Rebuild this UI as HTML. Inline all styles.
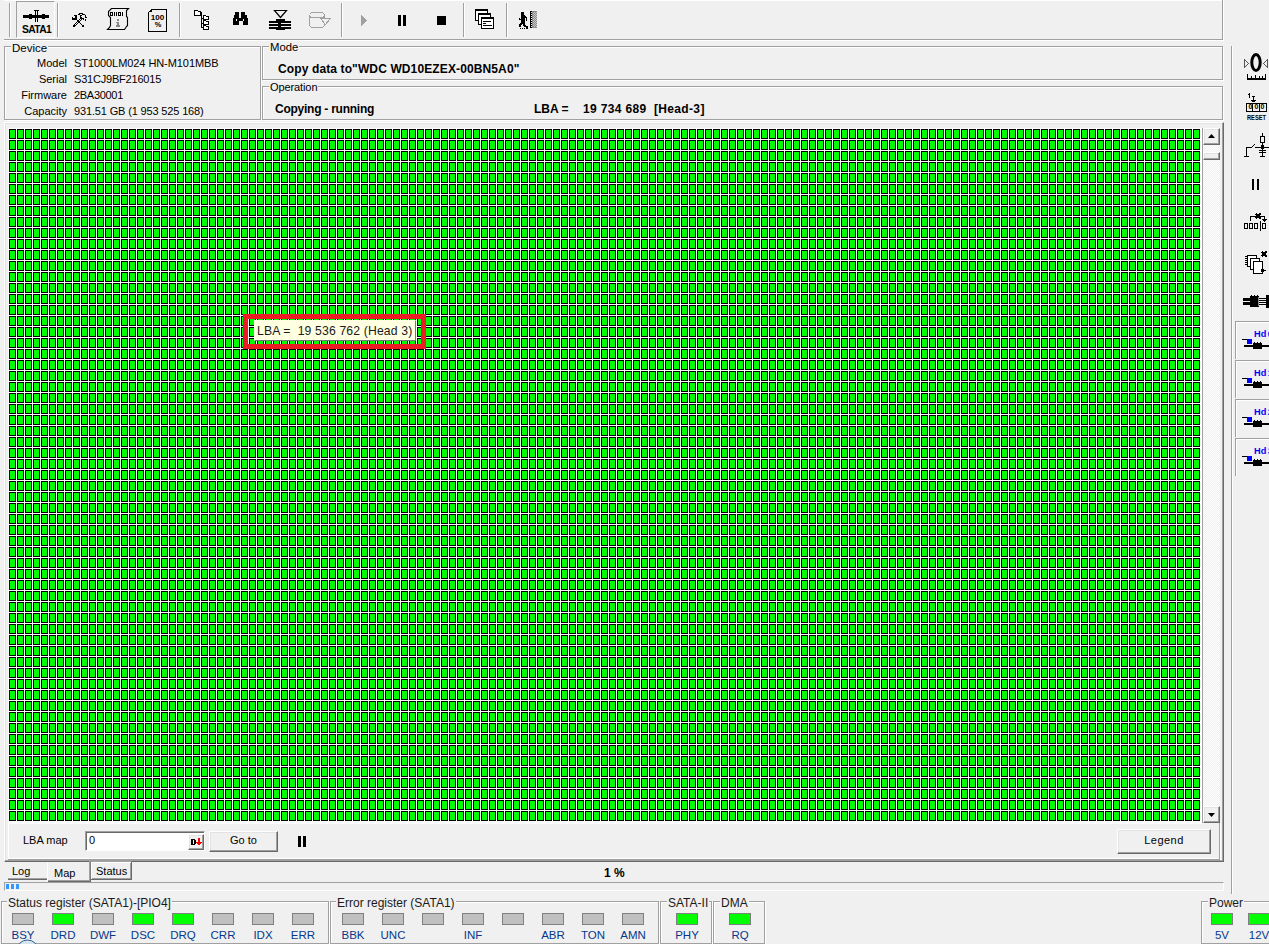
<!DOCTYPE html>
<html><head><meta charset="utf-8">
<style>
*{margin:0;padding:0;box-sizing:border-box}
html,body{width:1269px;height:944px;overflow:hidden;background:#f0f0f0;font-family:"Liberation Sans",sans-serif;color:#000}
.a{position:absolute}
.hl{position:absolute;height:1px;background:#a0a0a0}
.wl{position:absolute;height:1px;background:#fff}
.vl{position:absolute;width:1px;background:#a0a0a0}
.vw{position:absolute;width:1px;background:#fff}
.grp{position:absolute;border:1px solid #a0a0a0;box-shadow:inset 1px 1px 0 #fff,1px 1px 0 #fff}
.t{position:absolute;white-space:pre;font-size:11px;line-height:13px}
.b{font-weight:bold}
.sep{position:absolute;top:3px;width:2px;height:34px;border-left:1px solid #a0a0a0;border-right:1px solid #fff}
.led{position:absolute;width:22px;height:12px;border:1px solid #808080;background:#c0c0c0;top:913px}
.led.on{background:#00ff00;border-color:#7f7f7f}
.lt{position:absolute;white-space:pre;font-size:11.5px;line-height:14px;color:#06388a;top:928px}
.gt{position:absolute;white-space:pre;font-size:12px;line-height:14px;color:#1a1a1a;background:#f0f0f0;padding:0 1px;top:896px}
.btn{position:absolute;background:#f0f0f0;border-top:1px solid #fff;border-left:1px solid #fff;border-right:1px solid #696969;border-bottom:1px solid #696969;box-shadow:inset -1px -1px 0 #a0a0a0,inset 1px 1px 0 #e3e3e3}
</style></head><body>

<!-- top toolbar frame -->
<div class="wl" style="left:4px;top:0;width:1219px"></div>
<div class="hl" style="left:4px;top:39px;width:1219px"></div>
<div class="wl" style="left:4px;top:40px;width:1220px"></div>
<div class="vl" style="left:1222px;top:0;height:40px"></div>
<div class="vw" style="left:1223px;top:0;height:41px"></div>

<div class="sep" style="left:9px"></div>
<div class="sep" style="left:57px"></div>
<div class="sep" style="left:179px"></div>
<div class="sep" style="left:341px"></div>
<div class="sep" style="left:463px"></div>
<div class="sep" style="left:506px"></div>

<!-- SATA1 pressed button -->
<div class="a" style="left:16px;top:1px;width:39px;height:37px;border-top:1px solid #a0a0a0;border-left:1px solid #a0a0a0;border-right:1px solid #fff;border-bottom:1px solid #fff"></div>

<!-- ===== toolbar icons ===== -->
<svg class="a" style="left:0;top:0" width="560" height="40" shape-rendering="crispEdges">
 <!-- SATA connector -->
 <rect x="23" y="15" width="26" height="3" fill="#000"/>
 <rect x="29" y="14" width="3" height="5" fill="#000"/>
 <rect x="42" y="14" width="3" height="5" fill="#000"/>
 <rect x="34" y="10" width="5" height="1" fill="#000"/>
 <rect x="35" y="10" width="1" height="12" fill="#000"/>
 <rect x="37" y="10" width="1" height="12" fill="#000"/>
 <!-- hammer & wrench -->
 <g fill="#000"><rect x="72" y="17" width="1" height="1"/><rect x="72" y="18" width="1" height="1"/><rect x="72" y="19" width="1" height="1"/><rect x="73" y="18" width="1" height="1"/><rect x="73" y="19" width="1" height="1"/><rect x="73" y="25" width="1" height="1"/><rect x="73" y="26" width="1" height="1"/><rect x="74" y="15" width="1" height="1"/><rect x="74" y="18" width="1" height="1"/><rect x="74" y="19" width="1" height="1"/><rect x="74" y="24" width="1" height="1"/><rect x="74" y="25" width="1" height="1"/><rect x="74" y="26" width="1" height="1"/><rect x="75" y="15" width="1" height="1"/><rect x="75" y="16" width="1" height="1"/><rect x="75" y="17" width="1" height="1"/><rect x="75" y="18" width="1" height="1"/><rect x="75" y="19" width="1" height="1"/><rect x="75" y="23" width="1" height="1"/><rect x="75" y="25" width="1" height="1"/><rect x="76" y="15" width="1" height="1"/><rect x="76" y="16" width="1" height="1"/><rect x="76" y="17" width="1" height="1"/><rect x="76" y="18" width="1" height="1"/><rect x="76" y="19" width="1" height="1"/><rect x="76" y="22" width="1" height="1"/><rect x="76" y="24" width="1" height="1"/><rect x="77" y="20" width="1" height="1"/><rect x="77" y="21" width="1" height="1"/><rect x="77" y="23" width="1" height="1"/><rect x="78" y="14" width="1" height="1"/><rect x="78" y="20" width="1" height="1"/><rect x="78" y="21" width="1" height="1"/><rect x="78" y="22" width="1" height="1"/><rect x="79" y="13" width="1" height="1"/><rect x="79" y="14" width="1" height="1"/><rect x="79" y="19" width="1" height="1"/><rect x="79" y="21" width="1" height="1"/><rect x="79" y="22" width="1" height="1"/><rect x="80" y="13" width="1" height="1"/><rect x="80" y="15" width="1" height="1"/><rect x="80" y="16" width="1" height="1"/><rect x="80" y="17" width="1" height="1"/><rect x="80" y="18" width="1" height="1"/><rect x="80" y="20" width="1" height="1"/><rect x="80" y="23" width="1" height="1"/><rect x="81" y="13" width="1" height="1"/><rect x="81" y="15" width="1" height="1"/><rect x="81" y="17" width="1" height="1"/><rect x="81" y="18" width="1" height="1"/><rect x="81" y="19" width="1" height="1"/><rect x="81" y="24" width="1" height="1"/><rect x="82" y="13" width="1" height="1"/><rect x="82" y="14" width="1" height="1"/><rect x="82" y="18" width="1" height="1"/><rect x="82" y="25" width="1" height="1"/><rect x="82" y="26" width="1" height="1"/><rect x="83" y="14" width="1" height="1"/><rect x="83" y="18" width="1" height="1"/><rect x="83" y="19" width="1" height="1"/><rect x="83" y="25" width="1" height="1"/><rect x="83" y="26" width="1" height="1"/><rect x="84" y="14" width="1" height="1"/><rect x="85" y="15" width="1" height="1"/><rect x="85" y="16" width="1" height="1"/><rect x="85" y="17" width="1" height="1"/><rect x="85" y="19" width="1" height="1"/><rect x="85" y="20" width="1" height="1"/><rect x="86" y="17" width="1" height="1"/></g>
 <!-- scroll 01101 i -->
 <polygon points="111.5,8.5 128.5,8.5 126.5,10.5 126.5,16.5 127.5,17.5 127.5,25.5 126.5,26.5 124.5,29.5 107.5,29.5 109.5,27.5 110.5,25.5 110.5,17.5 108.5,15.5 108.5,11.5" fill="#f0f0f0" stroke="#000" stroke-width="1.1" shape-rendering="auto"/>
 <g fill="#000">
  <rect x="110" y="12" width="1" height="4"/><rect x="112" y="12" width="1" height="4"/><rect x="111" y="12" width="1" height="1"/><rect x="111" y="15" width="1" height="1"/>
  <rect x="114" y="12" width="1" height="4"/><rect x="116" y="12" width="1" height="4"/>
  <rect x="118" y="12" width="1" height="4"/><rect x="120" y="12" width="1" height="4"/><rect x="119" y="12" width="1" height="1"/><rect x="119" y="15" width="1" height="1"/>
  <rect x="122" y="12" width="1" height="4"/>
 </g>
 <rect x="117" y="19" width="2" height="2" fill="#888"/><rect x="117" y="22" width="2" height="4" fill="#888"/><rect x="116" y="22" width="1" height="1" fill="#888"/><rect x="116" y="25" width="4" height="2" fill="#888"/>
 <!-- 100% page -->
 <path d="M148.5 12.5l3-3h15v22h-18z" fill="#f0f0f0" stroke="#000"/>
 <rect x="150" y="11" width="2" height="1" fill="#000"/><rect x="151" y="10" width="1" height="2" fill="#000"/>
 <text x="157.5" y="20.3" text-anchor="middle" font-family="Liberation Sans" font-weight="bold" font-size="7.4" fill="#000" shape-rendering="auto" textLength="13.5" lengthAdjust="spacingAndGlyphs">100</text>
 <text x="158" y="27.3" text-anchor="middle" font-family="Liberation Sans" font-weight="bold" font-size="7.4" fill="#000" shape-rendering="auto">%</text>
 <!-- tree -->
 <g fill="#fff" stroke="#000">
  <path d="M194.5 10.5h3l1 1h2v4h-6z"/>
  <path d="M203.5 15.5h2l1 1h2v3h-5z"/>
  <path d="M203.5 20.5h2l1 1h2v3h-5z"/>
  <path d="M203.5 25.5h2l1 1h2v3h-5z"/>
 </g>
 <path d="M200.5 12.5v0h1v15h2M201.5 18h2M201.5 23h2" stroke="#000" fill="none"/>
 <!-- binoculars -->
 <g fill="#000">
  <rect x="235" y="12" width="4" height="3"/><rect x="241" y="12" width="4" height="3"/>
  <rect x="234" y="15" width="5" height="3"/><rect x="241" y="15" width="6" height="3"/>
  <rect x="233" y="18" width="15" height="3"/>
  <rect x="233" y="21" width="6" height="4"/><rect x="243" y="21" width="5" height="4"/>
 </g>
 <rect x="236" y="19" width="1" height="2" fill="#fff"/><rect x="243" y="19" width="1" height="2" fill="#fff"/>
 <!-- platters with triangle -->
 <path d="M274.5 10.5h12l-6 7z" fill="none" stroke="#000" stroke-width="1.2" shape-rendering="auto"/>
 <g fill="#000">
  <rect x="269" y="21" width="22" height="2"/><rect x="269" y="24" width="22" height="2"/><rect x="269" y="27" width="22" height="2"/>
  <rect x="276" y="19" width="9" height="2"/><rect x="278" y="20" width="3" height="9"/><rect x="276" y="29" width="9" height="1"/>
 </g>
 <!-- gray cylinder -->
 <g fill="none" stroke="#a0a0a0">
  <path d="M309.5 14.5v11l2 2h11l2-2v-2M309.5 14.5l2-2h11l2 2v4M309.5 16.5l2 1h11l2-1"/>
  <path d="M320.5 18.5h10l-5 6z" fill="#f0f0f0"/>
 </g>
 <!-- play pause stop -->
 <path d="M361 15l6 5.5-6 5.5z" fill="#a0a0a0"/>
 <rect x="398" y="15" width="3" height="11" fill="#000"/><rect x="403" y="15" width="3" height="11" fill="#000"/>
 <rect x="437" y="16" width="9" height="9" fill="#000"/>
 <!-- windows -->
 <g stroke="#000" fill="#fff">
  <rect x="475.5" y="9.5" width="12" height="11"/>
  <rect x="478.5" y="13.5" width="12" height="11"/>
  <rect x="481.5" y="17.5" width="12" height="11"/>
 </g>
 <rect x="475" y="9" width="13" height="2" fill="#000"/><rect x="478" y="13" width="13" height="2" fill="#000"/><rect x="481" y="17" width="13" height="2" fill="#000"/>
 <rect x="483" y="21" width="8" height="1" fill="#000"/><rect x="483" y="23" width="3" height="1" fill="#000"/><rect x="483" y="25" width="9" height="1" fill="#000"/>
 <!-- walking man + door -->
<rect x="521" y="12" width="3" height="3" fill="#000"/><rect x="521" y="15" width="4" height="9" fill="#000"/><rect x="524" y="16" width="2" height="2" fill="#000"/><rect x="526" y="17" width="1" height="4" fill="#000"/><rect x="525" y="17" width="1" height="1" fill="#000"/><rect x="519" y="18" width="1" height="2" fill="#000"/><rect x="520" y="19" width="1" height="1" fill="#000"/><rect x="520" y="23" width="2" height="2" fill="#000"/><rect x="519" y="24" width="2" height="3" fill="#000"/><rect x="523" y="23" width="2" height="3" fill="#000"/><rect x="524" y="25" width="2" height="2" fill="#000"/><rect x="525" y="26" width="2" height="1" fill="#000"/><rect x="526" y="26" width="2" height="3" fill="#000"/><rect x="520" y="28" width="1" height="1" fill="#000"/><rect x="522" y="28" width="1" height="1" fill="#000"/><rect x="524" y="28" width="1" height="1" fill="#000"/><rect x="530" y="11" width="1" height="17" fill="#000"/><rect x="531" y="11" width="1" height="1" fill="#000"/><rect x="531" y="13" width="1" height="1" fill="#000"/><rect x="531" y="15" width="1" height="1" fill="#000"/><rect x="531" y="17" width="1" height="1" fill="#000"/><rect x="531" y="19" width="1" height="1" fill="#000"/><rect x="531" y="21" width="1" height="1" fill="#000"/><rect x="531" y="23" width="1" height="1" fill="#000"/><rect x="531" y="25" width="1" height="1" fill="#000"/><rect x="531" y="27" width="1" height="1" fill="#000"/><rect x="532" y="11" width="5" height="17" fill="#8c8c8c"/><rect x="534" y="12" width="1" height="1" fill="#c8c8c8"/><rect x="536" y="12" width="1" height="1" fill="#c8c8c8"/><rect x="533" y="13" width="1" height="1" fill="#c8c8c8"/><rect x="535" y="13" width="1" height="1" fill="#c8c8c8"/><rect x="534" y="14" width="1" height="1" fill="#c8c8c8"/><rect x="536" y="14" width="1" height="1" fill="#c8c8c8"/><rect x="533" y="15" width="1" height="1" fill="#c8c8c8"/><rect x="535" y="15" width="1" height="1" fill="#c8c8c8"/><rect x="534" y="16" width="1" height="1" fill="#c8c8c8"/><rect x="536" y="16" width="1" height="1" fill="#c8c8c8"/><rect x="533" y="17" width="1" height="1" fill="#c8c8c8"/><rect x="535" y="17" width="1" height="1" fill="#c8c8c8"/><rect x="534" y="18" width="1" height="1" fill="#c8c8c8"/><rect x="536" y="18" width="1" height="1" fill="#c8c8c8"/><rect x="533" y="19" width="1" height="1" fill="#c8c8c8"/><rect x="535" y="19" width="1" height="1" fill="#c8c8c8"/><rect x="534" y="20" width="1" height="1" fill="#c8c8c8"/><rect x="536" y="20" width="1" height="1" fill="#c8c8c8"/><rect x="533" y="21" width="1" height="1" fill="#c8c8c8"/><rect x="535" y="21" width="1" height="1" fill="#c8c8c8"/><rect x="534" y="22" width="1" height="1" fill="#c8c8c8"/><rect x="536" y="22" width="1" height="1" fill="#c8c8c8"/><rect x="533" y="23" width="1" height="1" fill="#c8c8c8"/><rect x="535" y="23" width="1" height="1" fill="#c8c8c8"/><rect x="534" y="24" width="1" height="1" fill="#c8c8c8"/><rect x="536" y="24" width="1" height="1" fill="#c8c8c8"/><rect x="533" y="25" width="1" height="1" fill="#c8c8c8"/><rect x="535" y="25" width="1" height="1" fill="#c8c8c8"/><rect x="534" y="26" width="1" height="1" fill="#c8c8c8"/><rect x="536" y="26" width="1" height="1" fill="#c8c8c8"/>
</svg>
<div class="t b" style="left:22px;top:24px;font-size:10.3px;line-height:11px;letter-spacing:-0.6px">SATA1</div>

<!-- ===== right toolbar icons ===== -->
<svg class="a" style="left:1233px;top:44px" width="36" height="440" shape-rendering="crispEdges">
 <!-- 0 with triangles, ruler -->
 <path d="M11.5 15.5l4 4-4 4z" fill="none" stroke="#555"/>
 <path d="M34.5 15.5l-4 4 4 4z" fill="none" stroke="#555"/>
 <ellipse cx="23" cy="18.5" rx="4.2" ry="8" fill="none" stroke="#000" stroke-width="3" shape-rendering="auto"/>
 <rect x="14" y="34" width="19" height="2" fill="#000"/>
 <rect x="14" y="30" width="1" height="4" fill="#000"/><rect x="18" y="32" width="1" height="2" fill="#000"/><rect x="22" y="31" width="1" height="3" fill="#000"/><rect x="26" y="32" width="1" height="2" fill="#000"/><rect x="32" y="30" width="1" height="4" fill="#000"/><rect x="29" y="32" width="1" height="2" fill="#000"/>
 <!-- reset -->
 <rect x="16" y="49" width="1" height="5" fill="#000"/><rect x="15" y="50" width="1" height="1" fill="#000"/>
 <rect x="19" y="52" width="3" height="1" fill="#000"/><rect x="20" y="52" width="1" height="6" fill="#000"/><rect x="18" y="56" width="5" height="1" fill="#000"/><rect x="19" y="57" width="3" height="1" fill="#000"/>
 <rect x="13.5" y="59.5" width="20" height="8" fill="none" stroke="#000"/>
 <rect x="19" y="59" width="1" height="9" fill="#000"/><rect x="26" y="59" width="1" height="9" fill="#000"/>
 <rect x="13" y="67" width="21" height="1" fill="#000"/>
 <text x="15.5" y="63.5" font-family="Liberation Sans" font-size="7" font-weight="bold" fill="#000" shape-rendering="auto" dominant-baseline="middle">0</text>
 <text x="21.5" y="63.5" font-family="Liberation Sans" font-size="7" font-weight="bold" fill="#000" shape-rendering="auto" dominant-baseline="middle">0</text>
 <text x="27.5" y="63.5" font-family="Liberation Sans" font-size="7" font-weight="bold" fill="#000" shape-rendering="auto" dominant-baseline="middle">0</text>
 <text x="23.5" y="75.5" text-anchor="middle" font-family="Liberation Sans" font-weight="bold" font-size="7" fill="#000" shape-rendering="auto" textLength="19" lengthAdjust="spacingAndGlyphs">RESET</text>
 <!-- circuit -->
 <g fill="#000">
  <rect x="11" y="112" width="5" height="1"/><rect x="13" y="103" width="1" height="9"/><rect x="13" y="103" width="5" height="1"/>
  <path d="M18 103l4-3v1l-4 3z"/>
  <rect x="29" y="89" width="1" height="3"/><rect x="22" y="103" width="14" height="1"/><rect x="28" y="101" width="3" height="4"/>
  <rect x="26" y="106" width="7" height="1"/><rect x="26" y="108" width="7" height="1"/><rect x="29" y="104" width="1" height="8"/><rect x="27" y="112" width="5" height="1"/>
 </g>
 <rect x="27.5" y="92.5" width="4" height="6" fill="none" stroke="#000"/><rect x="29" y="99" width="1" height="2" fill="#000"/>
 <!-- pause -->
 <rect x="19" y="135" width="2" height="11" fill="#000"/><rect x="24" y="135" width="2" height="11" fill="#000"/>
 <!-- 000|0 -->
 <g fill="none" stroke="#000">
  <rect x="11.5" y="179.5" width="3" height="5"/><rect x="16.5" y="179.5" width="3" height="5"/><rect x="21.5" y="179.5" width="3" height="5"/><rect x="29.5" y="179.5" width="3" height="5"/>
  <path d="M17.5 176.5v-4h14v3"/>
 </g>
 <rect x="27" y="177" width="1" height="10" fill="#000"/>
 <path d="M29 175h5l-2.5 3z" fill="#000"/>
 <path d="M23 169l2 1 2-1 1 1-1 2 1 2-1 1-2-1-2 1-1-1 1-2-1-2z" fill="#000"/>
 <!-- copy pages -->
 <g fill="#fff" stroke="#000">
  <rect x="14.5" y="211.5" width="9" height="11"/>
  <rect x="17.5" y="214.5" width="9" height="11"/>
  <rect x="20.5" y="217.5" width="9" height="12"/>
 </g>
 <rect x="12" y="212" width="2" height="1" fill="#000"/><rect x="12" y="214" width="2" height="1" fill="#000"/><rect x="12" y="216" width="2" height="1" fill="#000"/><rect x="12" y="218" width="2" height="1" fill="#000"/><rect x="12" y="220" width="2" height="1" fill="#000"/>
 <rect x="28" y="225" width="3" height="3" fill="#000"/><rect x="31" y="226" width="2" height="1" fill="#000"/>
 <path d="M29 207l2 1 2-1 1 1-1 2 1 2-1 1-2-1-2 1-1-1 1-2-1-2z" fill="#000"/>
 <!-- connector -->
 <g fill="#000">
  <rect x="10" y="254" width="8" height="3"/><rect x="10" y="258" width="8" height="3"/>
  <rect x="17" y="252" width="9" height="11"/>
  <rect x="18" y="251" width="1" height="1"/><rect x="21" y="251" width="1" height="1"/><rect x="24" y="251" width="1" height="1"/>
  <rect x="26" y="254" width="8" height="1"/><rect x="26" y="256" width="8" height="1"/><rect x="26" y="258" width="8" height="1"/><rect x="26" y="260" width="8" height="1"/>
  <rect x="33" y="251" width="3" height="13"/>
 </g>
 <rect x="25" y="253" width="1" height="9" fill="#888"/>
</svg>


<!-- Device group -->
<div class="grp" style="left:4px;top:46px;width:257px;height:74px"></div>
<div class="t" style="left:11px;top:42px;background:#f0f0f0;padding:0 1px;font-size:11.5px">Device</div>
<div class="t" style="left:0;top:57px;width:67px;text-align:right">Model</div>
<div class="t" style="left:0;top:73px;width:67px;text-align:right">Serial</div>
<div class="t" style="left:0;top:89px;width:67px;text-align:right">Firmware</div>
<div class="t" style="left:0;top:105px;width:67px;text-align:right">Capacity</div>
<div class="t" style="left:74px;top:57px;letter-spacing:-0.07px">ST1000LM024 HN-M101MBB</div>
<div class="t" style="left:74px;top:73px;letter-spacing:-0.2px">S31CJ9BF216015</div>
<div class="t" style="left:74px;top:89px;letter-spacing:-0.3px">2BA30001</div>
<div class="t" style="left:74px;top:105px;letter-spacing:-0.15px">931.51 GB (1 953 525 168)</div>

<!-- Mode group -->
<div class="grp" style="left:262px;top:46px;width:961px;height:34px"></div>
<div class="t" style="left:269px;top:41px;background:#f0f0f0;padding:0 1px;font-size:11.3px">Mode</div>
<div class="t b" style="left:278px;top:63px;font-size:12px;letter-spacing:0.12px">Copy data to"WDC WD10EZEX-00BN5A0"</div>

<!-- Operation group -->
<div class="grp" style="left:262px;top:86px;width:961px;height:34px"></div>
<div class="t" style="left:269px;top:81px;background:#f0f0f0;padding:0 1px;font-size:11px;letter-spacing:-0.1px">Operation</div>
<div class="t b" style="left:275px;top:103px;font-size:12px;letter-spacing:-0.25px">Copying - running</div>
<div class="t b" style="left:534px;top:103px;font-size:12px">LBA =</div><div class="t b" style="left:583px;top:103px;font-size:12px;letter-spacing:0.35px">19 734 689  [Head-3]</div>

<!-- Right vertical line -->
<div class="vl" style="left:1231px;top:46px;height:848px"></div>
<div class="vw" style="left:1232px;top:46px;height:848px"></div>

<div class="a" style="left:1235px;top:321px;width:40px;height:38px;border-top:1px solid #a0a0a0;border-left:1px solid #a0a0a0;box-shadow:inset 1px 1px 0 #fff"></div>
<div class="a" style="left:1254px;top:329px;font-size:9.2px;font-weight:bold;line-height:11px;color:#0000ff;white-space:pre">Hd<span style="margin-left:1.6px">0</span></div>
<svg class="a" style="left:1240px;top:338px" width="29" height="12" shape-rendering="crispEdges"><rect x="2" y="1" width="5" height="1" fill="#000"/><rect x="7" y="1" width="5" height="5" fill="#0000ff"/><rect x="4" y="7" width="25" height="2" fill="#000"/><rect x="13" y="5" width="9" height="6" fill="#000"/><rect x="14" y="4" width="1" height="1" fill="#000"/><rect x="17" y="4" width="1" height="1" fill="#000"/><rect x="20" y="4" width="1" height="1" fill="#000"/></svg>
<div class="a" style="left:1235px;top:360px;width:40px;height:38px;border-top:1px solid #a0a0a0;border-left:1px solid #a0a0a0;box-shadow:inset 1px 1px 0 #fff"></div>
<div class="a" style="left:1254px;top:368px;font-size:9.2px;font-weight:bold;line-height:11px;color:#0000ff;white-space:pre">Hd<span style="margin-left:1.6px">1</span></div>
<svg class="a" style="left:1240px;top:377px" width="29" height="12" shape-rendering="crispEdges"><rect x="2" y="1" width="5" height="1" fill="#000"/><rect x="7" y="1" width="5" height="5" fill="#0000ff"/><rect x="4" y="7" width="25" height="2" fill="#000"/><rect x="13" y="5" width="9" height="6" fill="#000"/><rect x="14" y="4" width="1" height="1" fill="#000"/><rect x="17" y="4" width="1" height="1" fill="#000"/><rect x="20" y="4" width="1" height="1" fill="#000"/></svg>
<div class="a" style="left:1235px;top:399px;width:40px;height:38px;border-top:1px solid #a0a0a0;border-left:1px solid #a0a0a0;box-shadow:inset 1px 1px 0 #fff"></div>
<div class="a" style="left:1254px;top:407px;font-size:9.2px;font-weight:bold;line-height:11px;color:#0000ff;white-space:pre">Hd<span style="margin-left:1.6px">2</span></div>
<svg class="a" style="left:1240px;top:416px" width="29" height="12" shape-rendering="crispEdges"><rect x="2" y="1" width="5" height="1" fill="#000"/><rect x="7" y="1" width="5" height="5" fill="#0000ff"/><rect x="4" y="7" width="25" height="2" fill="#000"/><rect x="13" y="5" width="9" height="6" fill="#000"/><rect x="14" y="4" width="1" height="1" fill="#000"/><rect x="17" y="4" width="1" height="1" fill="#000"/><rect x="20" y="4" width="1" height="1" fill="#000"/></svg>
<div class="a" style="left:1235px;top:438px;width:40px;height:38px;border-top:1px solid #a0a0a0;border-left:1px solid #a0a0a0;box-shadow:inset 1px 1px 0 #fff"></div>
<div class="a" style="left:1254px;top:446px;font-size:9.2px;font-weight:bold;line-height:11px;color:#0000ff;white-space:pre">Hd<span style="margin-left:1.6px">3</span></div>
<svg class="a" style="left:1240px;top:455px" width="29" height="12" shape-rendering="crispEdges"><rect x="2" y="1" width="5" height="1" fill="#000"/><rect x="7" y="1" width="5" height="5" fill="#0000ff"/><rect x="4" y="7" width="25" height="2" fill="#000"/><rect x="13" y="5" width="9" height="6" fill="#000"/><rect x="14" y="4" width="1" height="1" fill="#000"/><rect x="17" y="4" width="1" height="1" fill="#000"/><rect x="20" y="4" width="1" height="1" fill="#000"/></svg>
<!-- Map panel -->
<div class="a" style="left:4px;top:122px;width:1220px;height:740px;border-top:1px solid #fff;border-left:1px solid #fff;border-right:1px solid #696969;border-bottom:1px solid #696969;box-shadow:inset -1px -1px 0 #a0a0a0,inset 1px 1px 0 #e3e3e3"></div>
<div class="a" style="left:8px;top:128px;width:1194px;height:696px;background:#fff"></div>
<svg class="a" style="left:9px;top:129px" width="1192" height="693" shape-rendering="crispEdges">
<defs><pattern id="p" width="8" height="11" patternUnits="userSpaceOnUse"><rect width="8" height="11" fill="#fff"/><rect width="7" height="10" fill="#000"/><rect x="1" y="1" width="5" height="8" fill="#00ff00"/></pattern></defs>
<rect width="1192" height="693" fill="url(#p)"/>
</svg>

<!-- bottom toolbar of map -->
<div class="vw" style="left:8px;top:824px;height:35px"></div><div class="wl" style="left:8px;top:858px;width:1211px"></div><div class="hl" style="left:8px;top:859px;width:1212px"></div>
<div class="vl" style="left:1219px;top:823px;height:36px"></div>
<div class="vw" style="left:1220px;top:823px;height:37px"></div>

<div class="t" style="left:23px;top:834px">LBA map</div>
<div class="a" style="left:85px;top:831px;width:120px;height:20px;background:#fff;border-top:1px solid #a0a0a0;border-left:1px solid #a0a0a0;border-right:1px solid #fff;border-bottom:1px solid #fff;box-shadow:inset 1px 1px 0 #696969"></div>
<div class="t" style="left:89px;top:834px">0</div>
<div class="btn" style="left:188px;top:834px;width:16px;height:16px"></div>
<svg class="a" style="left:188px;top:834px" width="16" height="16" shape-rendering="crispEdges"><rect x="3" y="5" width="2" height="6" fill="#000"/><rect x="5" y="5" width="2" height="1" fill="#000"/><rect x="5" y="10" width="2" height="1" fill="#000"/><rect x="6" y="6" width="2" height="4" fill="#000"/><rect x="10" y="4" width="2" height="4" fill="#f00"/><rect x="8" y="8" width="6" height="1" fill="#f00"/><rect x="9" y="9" width="4" height="1" fill="#f00"/><rect x="10" y="10" width="2" height="1" fill="#f00"/></svg>
<div class="btn" style="left:209px;top:831px;width:69px;height:21px"></div>
<div class="t" style="left:209px;top:834px;width:69px;text-align:center">Go to</div>
<div class="a" style="left:298px;top:836px;width:3px;height:11px;background:#000"></div>
<div class="a" style="left:303px;top:836px;width:3px;height:11px;background:#000"></div>
<div class="btn" style="left:1117px;top:829px;width:94px;height:25px"></div>
<div class="t" style="left:1117px;top:834px;width:94px;text-align:center;letter-spacing:0.5px">Legend</div>


<!-- scrollbar -->
<div class="vl" style="left:1202px;top:128px;height:695px"></div>
<div class="a" style="left:1203px;top:145px;width:17px;height:662px;background-color:#f7f7f7;background-image:repeating-conic-gradient(#f0f0f0 0 25%,#fff 0 50%);background-size:2px 2px"></div>
<div class="btn" style="left:1203px;top:128px;width:17px;height:17px"></div>
<svg class="a" style="left:1203px;top:128px" width="17" height="17"><path d="M5 10h7l-3.5-4z" fill="#000"/></svg>
<div class="btn" style="left:1203px;top:152px;width:17px;height:8px"></div>
<div class="btn" style="left:1203px;top:806px;width:17px;height:17px"></div>
<svg class="a" style="left:1203px;top:806px" width="17" height="17"><path d="M5 7h7l-3.5 4z" fill="#000"/></svg>

<!-- tooltip + red highlight -->
<div class="a" style="left:254px;top:320px;width:162px;height:21px;background:#ffffe1;border:1px solid #767676;border-top-color:#ffffe1;border-left-color:#ffffe1"></div>
<div class="a" style="left:257px;top:324px;white-space:pre;font-size:12.2px;line-height:14px;color:#1a1a1a;letter-spacing:0.15px">LBA =  19 536 762 (Head 3)</div>
<div class="a" style="left:243px;top:314px;width:183px;height:35px;border:5px solid #ed1c24"></div>

<!-- tabs -->
<div class="hl" style="left:8px;top:878px;width:39px"></div><div class="a" style="left:8px;top:879px;width:39px;height:1px;background:#696969"></div>
<div class="t" style="left:12px;top:865px">Log</div>
<div class="a" style="left:47px;top:862px;width:43px;height:18px;background:#f0f0f0"></div>
<div class="vw" style="left:47px;top:862px;height:19px"></div>
<div class="vl" style="left:89px;top:861px;height:19px"></div><div class="a" style="left:90px;top:861px;width:1px;height:20px;background:#696969"></div>
<div class="hl" style="left:48px;top:880px;width:42px"></div><div class="a" style="left:48px;top:881px;width:43px;height:1px;background:#696969"></div>
<div class="t" style="left:54px;top:867px">Map</div>
<div class="a" style="left:90px;top:861px;width:42px;height:19px;border-top:1px solid #a0a0a0;border-left:1px solid #808080;border-right:1px solid #696969;border-bottom:1px solid #696969;box-shadow:inset 1px 1px 0 #fff,inset -1px -1px 0 #a0a0a0"></div>
<div class="t" style="left:96px;top:865px">Status</div>
<div class="t b" style="left:604px;top:867px;font-size:12px">1 %</div>

<!-- progress -->
<div class="a" style="left:4px;top:882px;width:1220px;height:9px;border-top:1px solid #a0a0a0;border-left:1px solid #a0a0a0;border-bottom:1px solid #fff;border-right:1px solid #fff"></div>
<div class="a" style="left:6px;top:884px;width:3px;height:5px;background:#3399ff"></div>
<div class="a" style="left:11px;top:884px;width:3px;height:5px;background:#3399ff"></div>
<div class="a" style="left:16px;top:884px;width:3px;height:5px;background:#3399ff"></div>

<!-- bottom groups -->
<div class="grp" style="left:1px;top:901px;width:328px;height:43px"></div>
<div class="gt" style="left:7px">Status register (SATA1)-[PIO4]</div>
<div class="grp" style="left:330px;top:901px;width:329px;height:43px"></div>
<div class="gt" style="left:336px">Error register (SATA1)</div>
<div class="grp" style="left:660px;top:901px;width:52px;height:43px"></div>
<div class="gt" style="left:667px">SATA-II</div>
<div class="grp" style="left:713px;top:901px;width:52px;height:43px"></div>
<div class="gt" style="left:720px">DMA</div>
<div class="grp" style="left:1201px;top:901px;width:80px;height:43px"></div>
<div class="gt" style="left:1208px">Power</div>
<div class="led" style="left:12px"></div><div class="lt" style="left:3px;width:40px;text-align:center">BSY</div>
<div class="led on" style="left:52px"></div><div class="lt" style="left:43px;width:40px;text-align:center">DRD</div>
<div class="led" style="left:92px"></div><div class="lt" style="left:83px;width:40px;text-align:center">DWF</div>
<div class="led on" style="left:132px"></div><div class="lt" style="left:123px;width:40px;text-align:center">DSC</div>
<div class="led on" style="left:172px"></div><div class="lt" style="left:163px;width:40px;text-align:center">DRQ</div>
<div class="led" style="left:212px"></div><div class="lt" style="left:203px;width:40px;text-align:center">CRR</div>
<div class="led" style="left:252px"></div><div class="lt" style="left:243px;width:40px;text-align:center">IDX</div>
<div class="led" style="left:292px"></div><div class="lt" style="left:283px;width:40px;text-align:center">ERR</div>
<div class="led" style="left:342px"></div><div class="lt" style="left:333px;width:40px;text-align:center">BBK</div>
<div class="led" style="left:382px"></div><div class="lt" style="left:373px;width:40px;text-align:center">UNC</div>
<div class="led" style="left:422px"></div><div class="lt" style="left:413px;width:40px;text-align:center"></div>
<div class="led" style="left:462px"></div><div class="lt" style="left:453px;width:40px;text-align:center">INF</div>
<div class="led" style="left:502px"></div><div class="lt" style="left:493px;width:40px;text-align:center"></div>
<div class="led" style="left:542px"></div><div class="lt" style="left:533px;width:40px;text-align:center">ABR</div>
<div class="led" style="left:582px"></div><div class="lt" style="left:573px;width:40px;text-align:center">TON</div>
<div class="led" style="left:622px"></div><div class="lt" style="left:613px;width:40px;text-align:center">AMN</div>
<div class="led on" style="left:676px"></div><div class="lt" style="left:667px;width:40px;text-align:center">PHY</div>
<div class="led on" style="left:729px"></div><div class="lt" style="left:720px;width:40px;text-align:center">RQ</div>
<div class="led on" style="left:1211px"></div><div class="lt" style="left:1202px;width:40px;text-align:center">5V</div>
<div class="led on" style="left:1248px"></div><div class="lt" style="left:1239px;width:40px;text-align:center">12V</div>
<svg class="a" style="left:14px;top:938px" width="28" height="6"><ellipse cx="13.5" cy="12" rx="10.5" ry="10" fill="#d6e4ee" stroke="#2a5d8c" stroke-width="1"/></svg>
</body></html>
